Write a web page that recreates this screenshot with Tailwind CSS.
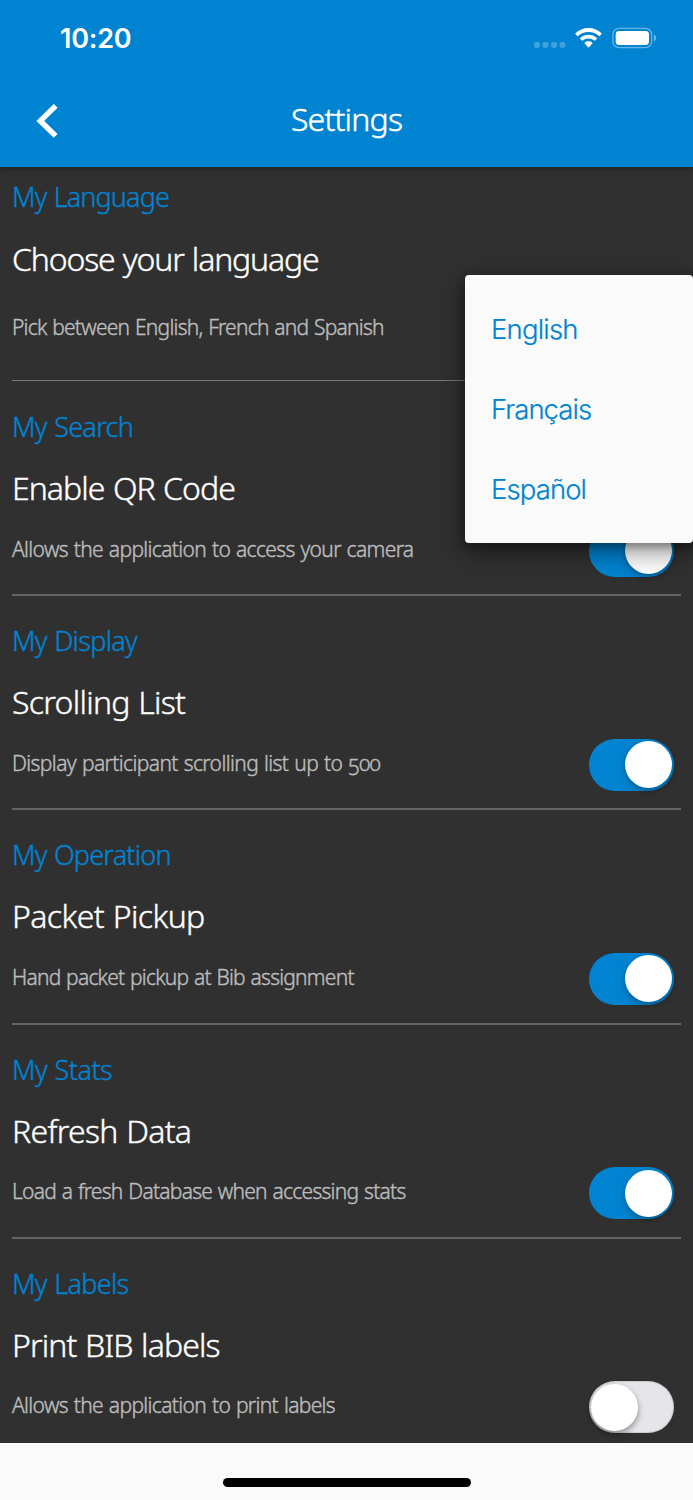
<!DOCTYPE html>
<html lang="en">
<head>
<meta charset="utf-8">
<meta name="viewport" content="width=device-width, initial-scale=1">
<title>Settings</title>
<script src="https://cdn.jsdelivr.net/npm/@tailwindcss/browser@4"></script>
</head>
<body class="bg-[#303030]">
<div class="relative flex h-[1500px] w-[693px] flex-col overflow-hidden bg-[#303030] font-['Noto_Sans',sans-serif] font-light text-white">

  <header class="z-10 h-[167px] shrink-0 bg-[#0083d0] shadow-[0_2px_6px_rgba(0,0,0,0.3)]">
    <div class="flex h-[76px] items-center justify-between pr-[36px] pl-[60px]">
      <span class="pt-[2px] font-['Inter',sans-serif] text-[27px] font-semibold tracking-[-0.2px]">10:20</span>
      <div class="flex items-center">
        <svg class="mt-[14px] mr-[9px]" width="32" height="6" viewBox="0 0 32 6" fill="#fff" fill-opacity=".25"><rect width="6" height="6" rx="2.4"/><rect x="8.5" width="6" height="6" rx="2.4"/><rect x="17" width="6" height="6" rx="2.4"/><rect x="25.500" width="6" height="6" rx="2.4"/></svg>
        <svg class="mr-[10px]" width="27" height="20" viewBox="0 0 27 20" fill="#fff"><path d="M13.500 0C18.600 0 23.200 2 26.500 5.200Q26.900 5.700 26.500 6.100L24.700 7.900Q24.300 8.200 23.900 7.900C21.200 5.400 17.600 3.900 13.500 3.900S5.800 5.400 3.100 7.900Q2.700 8.200 2.300 7.900L.5 6.100Q.1 5.700.5 5.200C3.800 2 8.400 0 13.500 0Z"/><path d="M13.500 6.700C16.700 6.700 19.700 7.900 21.900 10Q22.300 10.400 21.900 10.800L20.100 12.600Q19.700 12.900 19.300 12.600C17.700 11.300 15.700 10.500 13.500 10.500S9.300 11.300 7.700 12.600Q7.300 12.900 6.900 12.600L5.100 10.800Q4.700 10.400 5.100 10C7.300 7.900 10.300 6.700 13.500 6.700Z"/><path d="M13.500 13.300C15 13.300 16.300 13.800 17.300 14.700Q17.700 15.100 17.300 15.500L13.900 19.200Q13.500 19.600 13.100 19.200L9.700 15.500Q9.300 15.100 9.700 14.700C10.700 13.800 12 13.300 13.500 13.300Z"/></svg>
        <svg width="45" height="22" viewBox="0 0 45 22"><rect x=".9" y="1.400" width="38.700" height="19.200" rx="6" fill="none" stroke="#fff" stroke-opacity=".4" stroke-width="1.400"/><rect x="3.700" y="4" width="33.300" height="14" rx="3.400" fill="#fff"/><path d="M42 7.600C43.300 8.200 44 9.500 44 11S43.300 13.800 42 14.400Z" fill="#fff" fill-opacity=".45"/></svg>
      </div>
    </div>
    <div class="grid h-[90px] grid-cols-[1fr_auto_1fr] items-center">
      <svg class="ml-[36px]" width="22" height="34" viewBox="0 0 22 34" fill="none" stroke="#fff" stroke-width="5.500"><path d="M19.700 1.900 4.300 16.900 19.700 31.900"/></svg>
      <h1 class="-mt-[4px] text-[32px] leading-[44px] tracking-[-0.80px] [-webkit-text-stroke:0.5px]">Settings</h1>
    </div>
  </header>

  <main class="flex h-[1275.500px] shrink-0 flex-col px-3 [-webkit-text-stroke:0.4px] [word-spacing:1px]">
    <section class="h-[214px] shrink-0 border-b border-[#777]">
      <h2 class="pt-[10px] text-[27px] leading-[40px] tracking-[-0.86px] text-[#0083d0]">My Language</h2>
      <p class="mt-[20px] text-[32px] leading-[44px] tracking-[-1.15px]">Choose your language</p>
      <p class="mt-[31px] text-[21px] leading-[30px] tracking-[-0.77px] text-[#bdbdbd]">Pick between English, French and Spanish</p>
    </section>
    <section class="h-[215px] shrink-0 border-b-2 border-[#636363]">
      <h2 class="pt-[26px] text-[27px] leading-[40px] tracking-[-0.70px] text-[#0083d0]">My Search</h2>
      <p class="mt-[19px] text-[32px] leading-[44px] tracking-[-0.95px]">Enable QR Code</p>
      <div class="mt-[14.500px] flex items-start justify-between pr-[7px]">
        <p class="mt-[9px] text-[21px] leading-[30px] tracking-[-0.65px] text-[#bdbdbd]">Allows the application to access your camera</p>
        <span class="flex h-[52px] w-[85px] items-center justify-end rounded-full bg-[#0083d0] pr-[2px]"><span class="size-[47px] rounded-full bg-white shadow-[0_3px_6px_rgba(0,0,0,0.3)]"></span></span>
      </div>
    </section>
    <section class="h-[214.300px] shrink-0 border-b-2 border-[#636363]">
      <h2 class="pt-[25px] text-[27px] leading-[40px] tracking-[-0.70px] text-[#0083d0]">My Display</h2>
      <p class="mt-[19px] text-[32px] leading-[44px] tracking-[-0.72px]">Scrolling List</p>
      <div class="mt-[14.500px] flex items-start justify-between pr-[7px]">
        <p class="mt-[9px] text-[21px] leading-[30px] tracking-[-0.60px] text-[#bdbdbd] oldstyle-nums">Display participant scrolling list up to 500</p>
        <span class="flex h-[52px] w-[85px] items-center justify-end rounded-full bg-[#0083d0] pr-[2px]"><span class="size-[47px] rounded-full bg-white shadow-[0_3px_6px_rgba(0,0,0,0.3)]"></span></span>
      </div>
    </section>
    <section class="h-[214.300px] shrink-0 border-b-2 border-[#636363]">
      <h2 class="pt-[25px] text-[27px] leading-[40px] tracking-[-0.78px] text-[#0083d0]">My Operation</h2>
      <p class="mt-[19px] text-[32px] leading-[44px] tracking-[-0.60px]">Packet Pickup</p>
      <div class="mt-[14.500px] flex items-start justify-between pr-[7px]">
        <p class="mt-[9px] text-[21px] leading-[30px] tracking-[-0.78px] text-[#bdbdbd]">Hand packet pickup at Bib assignment</p>
        <span class="flex h-[52px] w-[85px] items-center justify-end rounded-full bg-[#0083d0] pr-[2px]"><span class="size-[47px] rounded-full bg-white shadow-[0_3px_6px_rgba(0,0,0,0.3)]"></span></span>
      </div>
    </section>
    <section class="h-[214.300px] shrink-0 border-b-2 border-[#636363]">
      <h2 class="pt-[25px] text-[27px] leading-[40px] tracking-[-0.54px] text-[#0083d0]">My Stats</h2>
      <p class="mt-[19px] text-[32px] leading-[44px] tracking-[-0.70px]">Refresh Data</p>
      <div class="mt-[14.500px] flex items-start justify-between pr-[7px]">
        <p class="mt-[9px] text-[21px] leading-[30px] tracking-[-0.75px] text-[#bdbdbd]">Load a fresh Database when accessing stats</p>
        <span class="flex h-[52px] w-[85px] items-center justify-end rounded-full bg-[#0083d0] pr-[2px]"><span class="size-[47px] rounded-full bg-white shadow-[0_3px_6px_rgba(0,0,0,0.3)]"></span></span>
      </div>
    </section>
    <section class="shrink-0">
      <h2 class="pt-[25px] text-[27px] leading-[40px] tracking-[-0.68px] text-[#0083d0]">My Labels</h2>
      <p class="mt-[19px] text-[32px] leading-[44px] tracking-[-0.88px]">Print BIB labels</p>
      <div class="mt-[14.500px] flex items-start justify-between pr-[7px]">
        <p class="mt-[9px] text-[21px] leading-[30px] tracking-[-0.65px] text-[#bdbdbd]">Allows the application to print labels</p>
        <span class="flex h-[52px] w-[85px] items-center rounded-full bg-[#e5e5ea] pl-[2px] shadow-[inset_0_0_1px_1px_rgba(0,0,0,0.12)]"><span class="size-[47px] rounded-full bg-white shadow-[0_3px_6px_rgba(0,0,0,0.4)]"></span></span>
      </div>
    </section>
  </main>

  <footer class="flex flex-1 justify-center bg-[#fafafa] pt-[35.500px]"><div class="h-[8.500px] w-[248px] rounded-full bg-black"></div></footer>

  <ul class="absolute top-[275px] right-0 flex h-[268px] w-[228px] flex-col rounded-[4px] bg-[#fafafa] pt-[14px] pl-[26px] font-['Inter',sans-serif] text-[27.500px] font-[350] text-[#0083d0] shadow-[0_8px_24px_4px_rgba(0,0,0,0.35),0_4px_8px_rgba(0,0,0,0.3)] [-webkit-text-stroke:0.2px]">
    <li class="flex h-[80.300px] items-center tracking-[-0.80px]">English</li>
    <li class="flex h-[80.300px] items-center tracking-[-0.95px]">Français</li>
    <li class="flex h-[80.300px] items-center tracking-[-0.90px]">Español</li>
  </ul>
</div>
</body>
</html>
